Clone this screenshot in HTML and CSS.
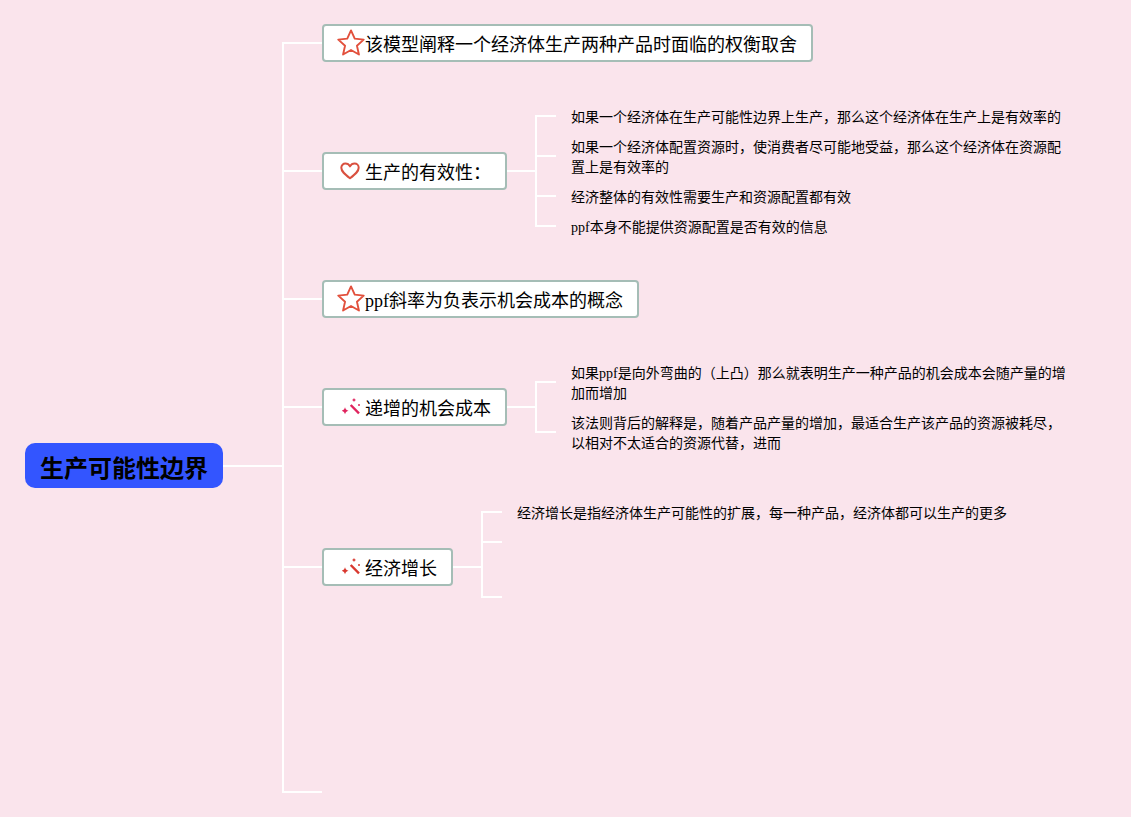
FILE: index.html
```html
<!DOCTYPE html>
<html lang="zh-CN">
<head>
<meta charset="utf-8">
<title>生产可能性边界</title>
<link rel="stylesheet" href="styles.css">
</head>
<body>
<main class="map">
<svg class="links" width="1131" height="817" viewBox="0 0 1131 817" fill="none" stroke="#fff" stroke-width="2">
  <path d="M223 466H283"/>
  <path d="M322 43H283V792H322"/>
  <path d="M283 171H322M283 299H322M283 407H322M283 567H322"/>
  <path d="M507 171H536"/>
  <path d="M556 116H536V226H556M536 156H556M536 196H556"/>
  <path d="M507 407H536"/>
  <path d="M556 382H536V432H556"/>
  <path d="M453 567H482"/>
  <path d="M502 512H482V597H502M482 542H502"/>
</svg>

<h1 class="root">生产可能性边界</h1>

<div class="node n1">
  <svg class="ic star" viewBox="1 1 24 24"><path d="M13 2.200l3.200 7.100 7.700.8-5.800 5.200 1.700 7.600-6.800-3.900-6.800 3.900 1.700-7.600L2.100 10.100l7.700-.8z" fill="none" stroke="#e2503c" stroke-width="1.600" stroke-linejoin="round"/></svg>
  <span>该模型阐释一个经济体生产两种产品时面临的权衡取舍</span>
</div>
<div class="node n2">
  <svg class="ic heart" viewBox="0 0 20 18"><path d="M10 16.300C4.500 12 1.300 9.300 1.300 5.800 1.300 3.200 3.200 1.500 5.400 1.500 7.300 1.500 9 2.500 10 4.400 11 2.500 12.700 1.500 14.600 1.500 16.800 1.500 18.700 3.200 18.700 5.800 18.700 9.300 15.500 12 10 16.300z" fill="none" stroke="#d9503f" stroke-width="2" stroke-linejoin="round"/></svg>
  <span>生产的有效性：</span>
</div>
<div class="node n3">
  <svg class="ic star" viewBox="1 1 24 24"><path d="M13 2.200l3.200 7.100 7.700.8-5.800 5.200 1.700 7.600-6.800-3.900-6.800 3.900 1.700-7.600L2.100 10.100l7.700-.8z" fill="none" stroke="#e2503c" stroke-width="1.600" stroke-linejoin="round"/></svg>
  <span>ppf斜率为负表示机会成本的概念</span>
</div>
<div class="node n4">
  <svg class="ic wand" viewBox="0 0 18 18"><path d="M8.700 7l8.300 8.300" stroke="#e0245e" stroke-width="2.400"/><path d="M3 9.200l1 2.500 2.500 1-2.500 1-1 2.500-1-2.500-2.500-1 2.500-1zM12 0l.7 1.300 1.300.7-1.300.7-.7 1.300-.7-1.300-1.300-.7 1.300-.7z" fill="#e0245e"/><circle cx="3" cy="12.700" r="1.700" fill="#e0245e"/><circle cx="17" cy="7" r="1" fill="#e0245e"/></svg>
  <span>递增的机会成本</span>
</div>
<div class="node n5">
  <svg class="ic wand" viewBox="0 0 18 18"><path d="M8.700 7l8.300 8.300" stroke="#d9382f" stroke-width="2.400"/><path d="M3 9.200l1 2.500 2.500 1-2.500 1-1 2.500-1-2.500-2.500-1 2.500-1zM12 0l.7 1.300 1.300.7-1.300.7-.7 1.300-.7-1.300-1.300-.7 1.300-.7z" fill="#d9382f"/><circle cx="3" cy="12.700" r="1.700" fill="#d9382f"/><circle cx="17" cy="7" r="1" fill="#d9382f"/></svg>
  <span>经济增长</span>
</div>

<p class="leaf a1">如果一个经济体在生产可能性边界上生产，那么这个经济体在生产上是有效率的</p>
<p class="leaf a2">如果一个经济体配置资源时，使消费者尽可能地受益，那么这个经济体在资源配置上是有效率的</p>
<p class="leaf a3">经济整体的有效性需要生产和资源配置都有效</p>
<p class="leaf a4">ppf本身不能提供资源配置是否有效的信息</p>
<p class="leaf b1">如果ppf是向外弯曲的（上凸）那么就表明生产一种产品的机会成本会随产量的增加而增加</p>
<p class="leaf b2">该法则背后的解释是，随着产品产量的增加，最适合生产该产品的资源被耗尽，以相对不太适合的资源代替，进而</p>
<p class="leaf c1">经济增长是指经济体生产可能性的扩展，每一种产品，经济体都可以生产的更多</p>
</main>
</body>
</html>
```
FILE: styles.css
```css
html, body { margin: 0; padding: 0; }
body {
  background: #fae4ec;
  font-family: "Liberation Serif", "Noto Sans CJK SC", serif;
  color: #000;
}
.map { position: relative; width: 1131px; height: 817px; overflow: hidden; }
.links { position: absolute; left: 0; top: 0; }
.root {
  position: absolute; left: 25px; top: 443px;
  width: 198px; height: 45px; margin: 0; padding-top: 6px;
  display: flex; align-items: center; justify-content: center;
  box-sizing: border-box;
  background: #3355ff; border-radius: 10px;
  font-size: 24px; font-weight: 700; line-height: 1;
}
.node {
  position: absolute; height: 38px; box-sizing: border-box;
  display: flex; align-items: center;
  background: #fff; border: 2px solid #a5bdb6; border-radius: 4px;
  font-size: 18px; white-space: nowrap;
}
.n1 { left: 322px; top: 24px; width: 491px; }
.n2 { left: 322px; top: 152px; width: 185px; }
.n3 { left: 322px; top: 280px; width: 317px; }
.n4 { left: 322px; top: 388px; width: 185px; }
.n5 { left: 322px; top: 548px; width: 131px; }
.ic { flex: none; display: block; }
.star { width: 28px; height: 28px; margin-left: 13px; }
.heart { width: 20px; height: 18px; margin-left: 16px; margin-right: 5px; }
.wand { width: 18px; height: 18px; margin-left: 18px; margin-right: 5px; }
.leaf {
  position: absolute; margin: 0; width: 498px;
  font-size: 14px; line-height: 20px;
}
.a1 { left: 571px; top: 108px; }
.a2 { left: 571px; top: 138px; }
.a3 { left: 571px; top: 188px; }
.a4 { left: 571px; top: 218px; }
.b1 { left: 571px; top: 364px; }
.b2 { left: 571px; top: 414px; }
.c1 { left: 517px; top: 504px; }
```
